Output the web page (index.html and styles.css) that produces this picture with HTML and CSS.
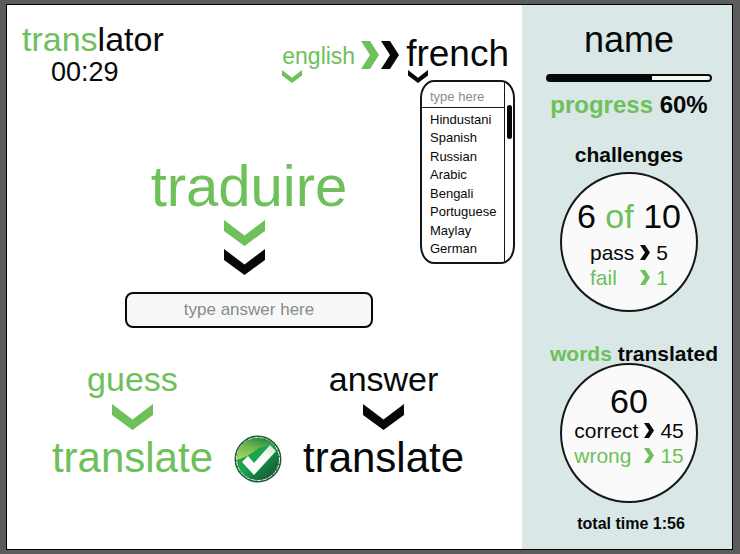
FILE: index.html
```html
<!DOCTYPE html>
<html lang="en">
<head>
<meta charset="utf-8">
<meta name="viewport" content="width=device-width, initial-scale=1">
<title>translator</title>
<link rel="stylesheet" href="styles.css">
</head>
<body>
<svg class="defs" aria-hidden="true">
  <symbol id="down" viewBox="0 0 41 26" preserveAspectRatio="none"><path d="M0 0L20.500 15.500L41 0V11L20.500 26L0 11Z"/></symbol>
  <symbol id="right" viewBox="0 0 18 28" preserveAspectRatio="none"><path d="M0 0H9L18 14L9 28H0L9 14Z"/></symbol>
</svg>
<div class="app">
  <main class="main">
    <header class="header">
      <div class="brand">
        <h1 class="logo"><span class="green">trans</span>lator</h1>
        <div class="timer">00:29</div>
      </div>
      <div class="languages">
        <button class="language language-from green" type="button">
          <span>english</span>
          <svg class="caret" aria-hidden="true"><use href="#down"/></svg>
        </button>
        <div class="direction">
          <svg class="arrow green" aria-hidden="true"><use href="#right"/></svg>
          <svg class="arrow" aria-hidden="true"><use href="#right"/></svg>
        </div>
        <div class="picker">
          <button class="language language-to" type="button">
            <span>french</span>
            <svg class="caret" aria-hidden="true"><use href="#down"/></svg>
          </button>
          <div class="menu">
            <div class="menu-body">
              <input class="menu-search" type="text" placeholder="type here" aria-label="Language">
              <ul class="menu-list">
                <li>Hindustani</li>
                <li>Spanish</li>
                <li>Russian</li>
                <li>Arabic</li>
                <li>Bengali</li>
                <li>Portuguese</li>
                <li>Maylay</li>
                <li>German</li>
              </ul>
            </div>
            <div class="menu-rail"><div class="menu-thumb"></div></div>
          </div>
        </div>
      </div>
    </header>

    <section class="question">
      <h2 class="word green">traduire</h2>
      <div class="steps">
        <svg class="chevron green" aria-hidden="true"><use href="#down"/></svg>
        <svg class="chevron" aria-hidden="true"><use href="#down"/></svg>
      </div>
      <input class="answer" type="text" placeholder="type answer here" aria-label="Answer">
    </section>

    <section class="actions">
      <button class="action green" type="button">
        <span class="action-kind">guess</span>
        <svg class="chevron" aria-hidden="true"><use href="#down"/></svg>
        <span class="action-name">translate</span>
      </button>
      <button class="confirm" type="button" aria-label="Confirm">
        <svg viewBox="0 0 48 48" aria-hidden="true">
          <defs>
            <linearGradient id="ball" x1="0.1" y1="0.1" x2="0.85" y2="0.9">
              <stop offset="0" stop-color="#2f9a45"/>
              <stop offset="0.5" stop-color="#16a84f"/>
              <stop offset="0.75" stop-color="#167a40"/>
              <stop offset="1" stop-color="#1d5a33"/>
            </linearGradient>
            <linearGradient id="gloss" x1="0.2" y1="0.9" x2="0.6" y2="0">
              <stop offset="0" stop-color="#a0d065"/>
              <stop offset="0.5" stop-color="#73b850"/>
              <stop offset="1" stop-color="#2f8c43"/>
            </linearGradient>
            <linearGradient id="tick" x1="0.3" y1="0.8" x2="1" y2="0">
              <stop offset="0" stop-color="#ffffff"/>
              <stop offset="0.6" stop-color="#f4faf2"/>
              <stop offset="1" stop-color="#c4e2c0"/>
            </linearGradient>
          </defs>
          <circle cx="24" cy="24" r="23.500" fill="#205c35"/>
          <circle cx="24" cy="24" r="21.500" fill="url(#ball)" stroke="#e6f2e6" stroke-width="1" stroke-dasharray="5 1"/>
          <path d="M3 25C2 12 12 3 24 3C32 3 37 6 40 10C30 10 24 13 18 18C12 22 8 23 3 25Z" fill="url(#gloss)"/>
          <path d="M8 27L14 21L20 28L36 10L42 16L20 40Z" fill="url(#tick)"/>
        </svg>
      </button>
      <button class="action" type="button">
        <span class="action-kind">answer</span>
        <svg class="chevron" aria-hidden="true"><use href="#down"/></svg>
        <span class="action-name">translate</span>
      </button>
    </section>
  </main>

  <aside class="sidebar">
    <h2 class="name">name</h2>
    <div class="progress" role="progressbar" aria-valuenow="60" aria-valuemin="0" aria-valuemax="100" aria-label="progress">
      <div class="progress-fill"></div>
    </div>
    <p class="progress-text"><span class="green">progress</span> 60%</p>

    <h3 class="stat-title">challenges</h3>
    <div class="stat challenges">
      <div class="stat-total">6 <span class="green">of</span> 10</div>
      <dl class="stat-rows">
        <dt>pass</dt>
        <dd><svg class="mark" aria-hidden="true"><use href="#right"/></svg></dd>
        <dd>5</dd>
        <dt class="green">fail</dt>
        <dd class="green"><svg class="mark" aria-hidden="true"><use href="#right"/></svg></dd>
        <dd class="green">1</dd>
      </dl>
    </div>

    <h3 class="stat-title words-title"><span class="green">words</span> translated</h3>
    <div class="stat words">
      <div class="stat-total">60</div>
      <dl class="stat-rows">
        <dt>correct</dt>
        <dd><svg class="mark" aria-hidden="true"><use href="#right"/></svg></dd>
        <dd>45</dd>
        <dt class="green">wrong</dt>
        <dd class="green"><svg class="mark" aria-hidden="true"><use href="#right"/></svg></dd>
        <dd class="green">15</dd>
      </dl>
    </div>
    <p class="total-time">total time 1:56</p>
  </aside>
</div>
</body>
</html>
```
FILE: styles.css
```css
* {
  box-sizing: border-box;
  margin: 0;
  padding: 0;
}

body {
  display: flex;
  min-height: 100vh;
  padding: 4px 7px 4px 6px;
  background: #5c5c5c;
  color: #070909;
  font-family: "Liberation Sans", Arial, sans-serif;
}

button,
input {
  border: 0;
  background: none;
  color: inherit;
  font-family: inherit;
}

button {
  cursor: pointer;
}

h1, h2, h3 {
  font-weight: normal;
}

svg {
  display: block;
  fill: currentColor;
}

.defs {
  position: absolute;
  width: 0;
  height: 0;
}

.green,
button.green {
  color: #6dc05a;
}

.app {
  display: grid;
  grid-template-columns: 1fr 210px;
  flex: 1;
  border: 1px solid #000;
  background: #fff;
}

.header {
  display: flex;
  justify-content: space-between;
  align-items: flex-start;
  padding: 16px 13px 0 15px;
}

.logo {
  font-size: 34px;
  line-height: 36px;
}

.timer {
  padding-left: 29px;
  font-size: 27px;
  line-height: 30px;
}

.languages {
  display: flex;
  align-items: flex-end;
  padding-top: 17px;
}

.language {
  display: block;
  text-align: left;
}

.language span {
  display: block;
}

.language-from {
  font-size: 23px;
  line-height: 28px;
}

.language-to {
  font-size: 37px;
  line-height: 32px;
}

.caret {
  width: 20px;
  height: 13px;
}

.language-to .caret {
  margin-left: 2px;
}

.direction {
  display: flex;
  gap: 2px;
  padding: 0 7px 14px 6px;
}

.arrow {
  width: 18px;
  height: 28px;
}

.picker {
  position: relative;
}

.menu {
  position: absolute;
  top: 42px;
  right: -6px;
  display: grid;
  grid-template-columns: 1fr 8px;
  width: 95px;
  height: 184px;
  overflow: hidden;
  border: 2px solid #161818;
  border-radius: 14px / 18px;
  background: #fff;
  font-size: 13px;
}

.menu-body {
  display: flex;
  flex-direction: column;
  border-right: 1px solid #161818;
}

.menu-search {
  width: 100%;
  height: 26px;
  padding: 4px 0 0 8px;
  border-bottom: 1px solid #161818;
  font-size: 13px;
}

.menu-list {
  display: flex;
  flex: 1;
  flex-direction: column;
  justify-content: space-between;
  padding: 3px 0 4px 8px;
  line-height: 18px;
  list-style: none;
}

.menu-rail {
  padding-top: 23px;
}

.menu-thumb {
  width: 5px;
  height: 34px;
  margin: 0 auto;
  border-radius: 3px;
  background: #070909;
}

::placeholder {
  color: #8a8a8a;
  opacity: 1;
}

.question {
  display: flex;
  flex-direction: column;
  align-items: center;
  padding: 68px 31px 0 0;
}

.word {
  font-size: 58px;
  line-height: 62px;
}

.steps {
  display: grid;
  gap: 3px;
  padding: 3px 10px 17px 0;
}

.chevron {
  width: 41px;
  height: 26px;
}

.answer {
  width: 248px;
  height: 36px;
  border: 2px solid #070909;
  border-radius: 8px;
  background: #f6f8f8;
  font-size: 17px;
  text-align: center;
}

.actions {
  display: flex;
  justify-content: center;
  align-items: flex-end;
  gap: 21px;
  padding: 32px 13px 0 0;
}

.action {
  display: flex;
  flex-direction: column;
  align-items: center;
}

.action-kind {
  padding-bottom: 6px;
  font-size: 34px;
  line-height: 38px;
}

.action-name {
  padding-top: 3px;
  font-size: 42px;
  line-height: 50px;
}

.confirm {
  width: 48px;
  height: 48px;
}

.sidebar {
  display: flex;
  flex-direction: column;
  align-items: center;
  padding: 15px 0 0 4px;
  background: #d9e7e6;
}

.name {
  font-size: 36px;
  line-height: 40px;
}

.progress {
  width: 166px;
  height: 8px;
  margin: 14px 0 9px;
  border: 2px solid #070909;
  border-radius: 4px;
  background: #f6f8f2;
}

.progress-fill {
  width: 64%;
  height: 100%;
  background: #070909;
}

.progress-text {
  font-size: 24px;
  font-weight: bold;
  line-height: 28px;
}

.stat-title {
  margin-top: 26px;
  font-size: 21px;
  font-weight: bold;
  line-height: 20px;
}

.words-title {
  align-self: flex-start;
  margin-top: 32px;
  padding-left: 24px;
}

.stat {
  width: 138px;
  height: 140px;
  border: 2px solid #161818;
  border-radius: 50%;
  background: #fafafa;
}

.challenges {
  margin-top: 7px;
  padding-top: 25px;
}

.words {
  margin-top: -1px;
  padding-top: 19px;
}

.stat-total {
  font-size: 34px;
  line-height: 34px;
  text-align: center;
}

.stat-rows {
  display: grid;
  grid-template-columns: auto auto auto;
  justify-content: center;
  align-items: center;
  column-gap: 6px;
  font-size: 21px;
  line-height: 25px;
}

.challenges .stat-rows {
  padding-top: 7px;
}

.mark {
  width: 10px;
  height: 15px;
}

.total-time {
  margin-top: 12px;
  padding-left: 4px;
  font-size: 16px;
  font-weight: bold;
  line-height: 18px;
}
```
